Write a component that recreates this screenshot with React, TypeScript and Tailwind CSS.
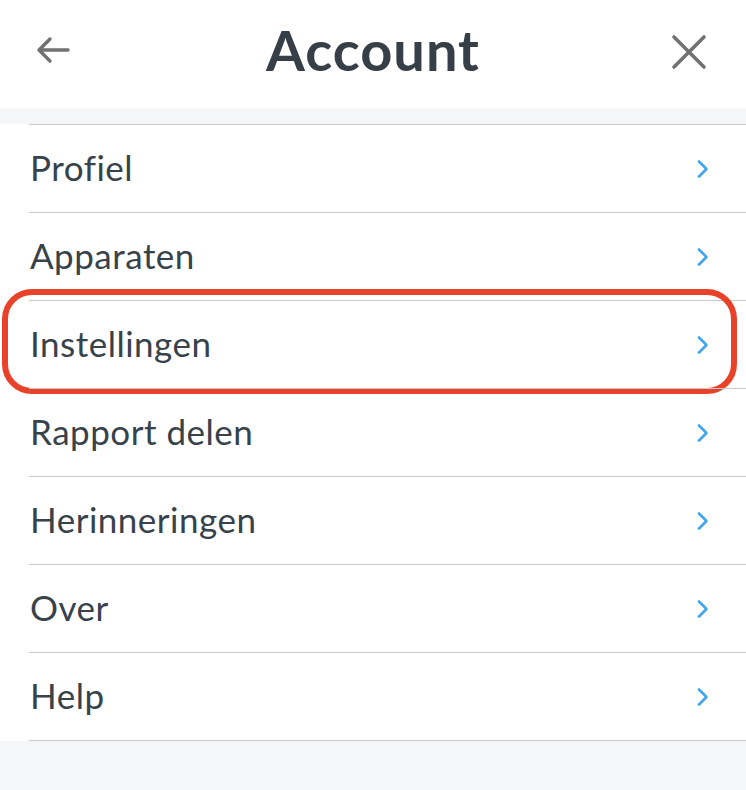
import React from "react";

const items = ["Profiel", "Apparaten", "Instellingen", "Rapport delen", "Herinneringen", "Over", "Help"];

function Chevron() {
  return (
    <svg width="14" height="20" viewBox="0 0 14 20" fill="none">
      <path d="M3 2.5 L10.5 10 L3 17.5" stroke="#3fa6ee" strokeWidth="2.6" strokeLinecap="round" strokeLinejoin="round" />
    </svg>
  );
}

export default function App() {
  return (
    <div className="w-[746px] h-[790px] bg-[#f5f6f8] overflow-hidden" style={{ fontFamily: "Lato, 'Open Sans', sans-serif" }}>
      <header className="h-[108px] bg-white flex items-center justify-between pl-[36px] pr-[39px] relative">
        <svg width="34" height="28" viewBox="0 0 34 28" fill="none" className="mt-[-8px]">
          <path d="M32 14 H4 M14 3 L3 14 L14 25" stroke="#717171" strokeWidth="3.4" strokeLinecap="round" strokeLinejoin="round" />
        </svg>
        <h1 className="absolute left-0 right-0 top-[14px] text-center text-[56px] font-bold tracking-[1px] text-[#363f47] leading-[72px] pointer-events-none">Account</h1>
        <svg width="36" height="36" viewBox="0 0 36 36" fill="none" className="mt-[-4px]">
          <path d="M3 3 L33 33 M33 3 L3 33" stroke="#717171" strokeWidth="3.6" strokeLinecap="round" />
        </svg>
      </header>
      <div className="h-[16px]" />
      <div className="bg-white">
        <div className="ml-[29px]">
          {items.map((label, i) => (
            <div key={label} className="relative h-[88px] border-t border-[#cacaca] flex items-center justify-between pl-px pr-[36px]">
              <span className="text-[35px] tracking-[0.5px] text-[#37424b] leading-none mt-[-3px]">{label}</span>
              <Chevron />
              {i === 2 && (
                <div className="absolute left-[-27px] right-[9px] top-[-12px] bottom-[-6px] border-[6px] border-[#e8432a] rounded-[30px] pointer-events-none" />
              )}
            </div>
          ))}
          <div className="h-px bg-[#cacaca]" />
        </div>
      </div>
    </div>
  );
}
